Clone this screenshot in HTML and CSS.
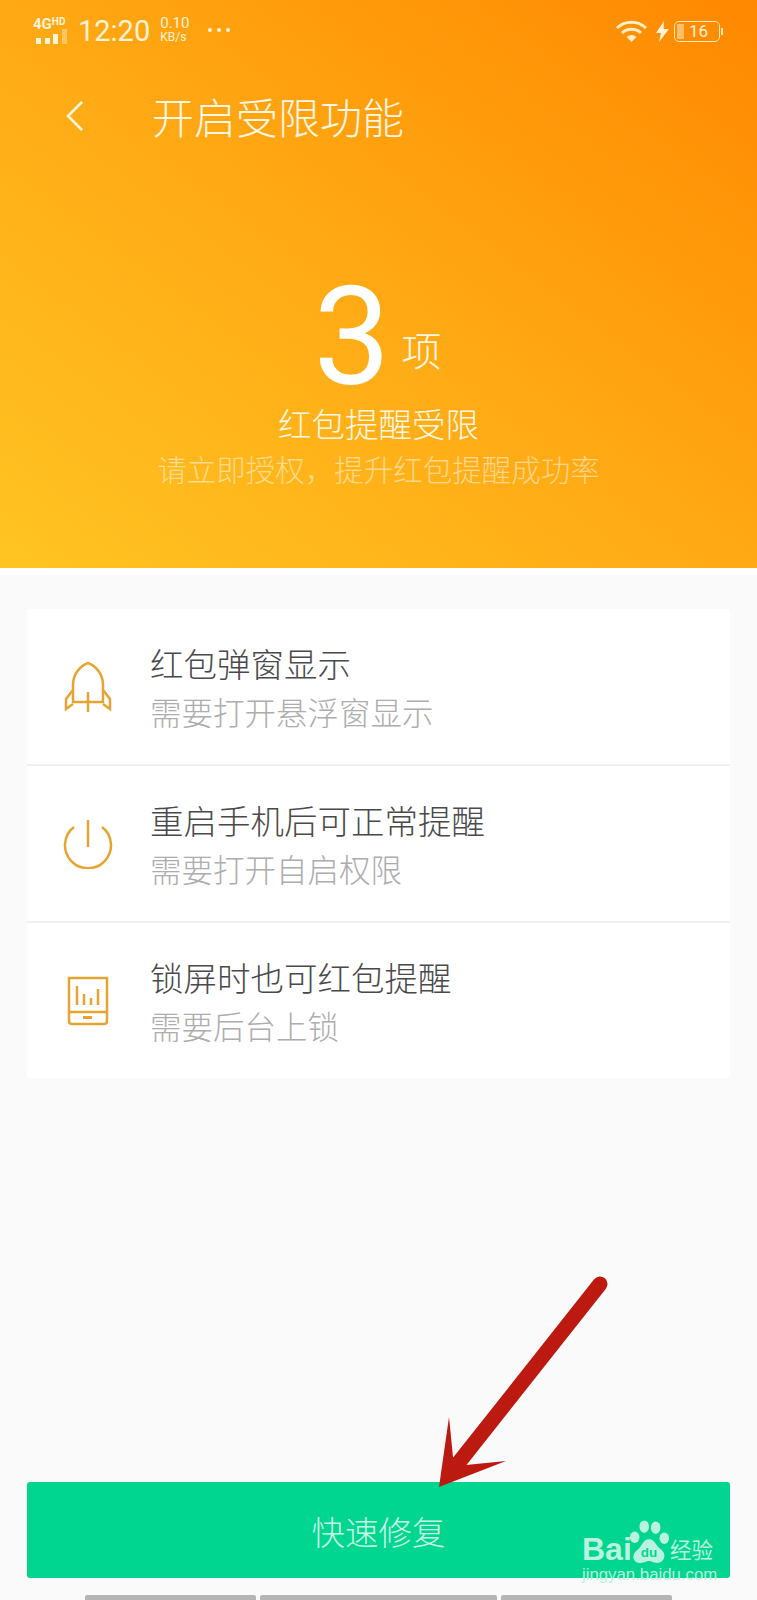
FILE: index.html
```html
<!DOCTYPE html>
<html lang="zh-CN">
<head>
  <meta charset="UTF-8" />
  <meta name="viewport" content="width=device-width, initial-scale=1.0" />
  <title>开启受限功能</title>
  <link rel="stylesheet" href="styles.css">
</head>
<body>

  <header class="hero">
    <!-- Status bar -->
    <div class="statusbar">
      <div class="net">
        <div class="net-label">4G<span>HD</span></div>
        <div class="signal"><i></i><i></i><i></i><i></i></div>
      </div>
      <div class="clock">12:20</div>
      <div class="speed"><span>0.10</span><small>KB/s</small></div>
      <div class="dots"><i></i><i></i><i></i></div>
      <div class="status-right">
        <svg class="wifi" width="33" height="22" viewBox="0 0 33 22">
          <path d="M2 8 A21 21 0 0 1 31 8" fill="none" stroke="#ffeec8" stroke-width="3"/>
          <path d="M7 13 A14 14 0 0 1 26 13" fill="none" stroke="#ffeec8" stroke-width="3"/>
          <path d="M11.5 17 A7.5 7.5 0 0 1 21.5 17 L16.5 22 Z" fill="#ffeec8"/>
        </svg>
        <svg class="bolt" width="13" height="21" viewBox="0 0 13 21">
          <path d="M8 0 L0 12 L5 12 L3 21 L13 8 L7.500 8 Z" fill="#fff3d8"/>
        </svg>
        <div class="battery">
          <div class="battery-level"></div>
          <span>16</span>
        </div>
        <div class="battery-tip"></div>
      </div>
    </div>

    <div class="titlebar">
      <svg class="back" width="20" height="32" viewBox="0 0 20 32">
        <path d="M17 2 L3 16 L17 30" fill="none" stroke="#fff6e4" stroke-width="2.500"/>
      </svg>
      <h1>开启受限功能</h1>
    </div>

    <div class="count"><b>3</b><span>项</span></div>
    <h2>红包提醒受限</h2>
    <p>请立即授权，提升红包提醒成功率</p>
  </header>

  <main>
    <section class="card">
      <div class="row">
        <div class="row-icon">
          <svg width="48" height="52" viewBox="0 0 48 52" fill="none" stroke="#e5a530" stroke-width="2.500">
            <path d="M9 41 V24 C9 13 16 5 24 2 C32 5 39 13 39 24 V41 H9 Z"/>
            <path d="M9 29 L2 38 V48 L9 43"/>
            <path d="M39 29 L46 38 V48 L39 43"/>
            <path d="M24 31 V51"/>
          </svg>
        </div>
        <div class="row-text">
          <h3>红包弹窗显示</h3>
          <p>需要打开悬浮窗显示</p>
        </div>
      </div>
      <div class="row">
        <div class="row-icon">
          <svg width="50" height="50" viewBox="0 0 50 50" fill="none" stroke="#e5a530" stroke-width="2.500">
            <path d="M11 8 A23 23 0 1 0 39 8"/>
            <path d="M25 1 V28"/>
          </svg>
        </div>
        <div class="row-text">
          <h3>重启手机后可正常提醒</h3>
          <p>需要打开自启权限</p>
        </div>
      </div>
      <div class="row">
        <div class="row-icon">
          <svg width="42" height="50" viewBox="0 0 42 50" fill="none" stroke="#e5a530" stroke-width="2.500">
            <path d="M2 2 H40 V45 Q40 48 37 48 H5 Q2 48 2 45 Z"/>
            <path d="M2 36 H40"/>
            <path d="M10 10 V29 M17 18 V29 M24 22 V29 M31 13 V29"/>
            <path d="M16 41.500 H25" stroke-width="3"/>
          </svg>
        </div>
        <div class="row-text">
          <h3>锁屏时也可红包提醒</h3>
          <p>需要后台上锁</p>
        </div>
      </div>
    </section>

    <button class="fix-btn">快速修复</button>

    <div class="bottom-bars"><i></i><i></i><i></i></div>
  </main>

  <!-- Red annotation arrow -->
  <svg class="arrow" width="190" height="230" viewBox="0 0 190 230">
    <path d="M170 14 L30 191" stroke="#bc1a10" stroke-width="15" stroke-linecap="round" fill="none"/>
    <path d="M9 217 L19 147 L23 187 L36 195 L76 191 Z" fill="#bc1a10"/>
  </svg>

  <!-- Baidu watermark -->
  <div class="watermark">
    <div class="wm-top">
      <span class="wm-bai">Bai</span>
      <svg class="wm-paw" width="42" height="44" viewBox="0 0 44 46">
        <ellipse cx="7" cy="18" rx="5" ry="6" fill="#b9f2de"/>
        <ellipse cx="17" cy="7" rx="5" ry="6.500" fill="#b9f2de"/>
        <ellipse cx="29" cy="8" rx="5" ry="6.500" fill="#b9f2de"/>
        <ellipse cx="38" cy="19" rx="5" ry="6" fill="#b9f2de"/>
        <path d="M22 20 C28 20 29 27 35 31 C41 36 38 45 30 45 C26 45 25 43 22 43 C19 43 18 45 13 45 C5 45 3 36 10 31 C15 27 16 20 22 20 Z" fill="#b9f2de"/>
        <text x="22" y="39" text-anchor="middle" class="wm-du">du</text>
      </svg>
      <span class="wm-cn">经验</span>
    </div>
    <div class="wm-url">jingyan.baidu.com</div>
  </div>

</body>
</html>
```

FILE: styles.css
```css
body {
  margin: 0;
  width: 757px;
  height: 1600px;
  overflow: hidden;
  position: relative;
  background: #fafafa;
  font-family: "Noto Sans CJK SC", "Noto Sans", sans-serif;
  display: flex;
  flex-direction: column;
}

/* Orange header */
.hero {
  height: 568px;
  box-sizing: border-box;
  background: linear-gradient(to top right, #ffc422 0%, #ffa914 50%, #ff8800 100%);
  color: white;
  text-align: center;
}
.statusbar {
  height: 60px;
  padding: 14px 34px 0 33px;
  box-sizing: border-box;
  display: flex;
  align-items: flex-start;
  color: #fff3d8;
  font-family: Roboto, "Liberation Sans", sans-serif;
}
.net {
  width: 36px;
  margin-right: 9px;
}
.net-label {
  font-size: 15px;
  font-weight: bold;
  line-height: 15px;
  text-align: left;
  white-space: nowrap;
}
.net-label span {
  font-size: 10px;
  vertical-align: 4px;
}
.signal {
  display: flex;
  align-items: flex-end;
  gap: 3.500px;
  height: 15px;
  margin: -3px 0 0 3px;
}
.signal i {
  width: 5px;
  background: #fff3d8;
}
.signal i:nth-child(1) { height: 6px; }
.signal i:nth-child(2) { height: 6px; }
.signal i:nth-child(3) { height: 10px; }
.signal i:nth-child(4) { height: 15px; opacity: 0.4; }
.clock {
  font-size: 29px;
  font-weight: 400;
  line-height: 34px;
  margin-right: 10px;
}
.speed {
  display: flex;
  flex-direction: column;
  font-size: 15px;
  line-height: 15px;
  margin-top: 2px;
  text-align: left;
}
.speed small {
  font-size: 12px;
  line-height: 13px;
}
.dots {
  display: flex;
  gap: 5px;
  margin: 14px 0 0 19px;
}
.dots i {
  width: 4px;
  height: 4px;
  border-radius: 50%;
  background: #fff3d8;
}
.status-right {
  margin-left: auto;
  display: flex;
  align-items: center;
  height: 24px;
  margin-top: 5px;
}
.wifi {
  margin-right: 8px;
}
.bolt {
  margin-right: 5px;
}
.battery {
  width: 46px;
  height: 21px;
  box-sizing: border-box;
  border: 1.500px solid #ffe9bd;
  border-radius: 5px;
  position: relative;
  font-size: 17px;
  line-height: 18px;
  padding-left: 14px;
  text-align: left;
}
.battery-level {
  position: absolute;
  left: 2px;
  top: 2px;
  bottom: 2px;
  width: 7px;
  background: #ffbe6b;
}
.battery-tip {
  width: 2px;
  height: 7px;
  margin-left: 1px;
  background: #ffe9bd;
}
.titlebar {
  height: 58px;
  margin-top: 27px;
  display: flex;
  align-items: center;
  padding-left: 65px;
}
.back {
  margin-right: 67px;
}
.titlebar h1 {
  margin: 0;
  font-size: 42px;
  font-weight: 300;
  line-height: 58px;
  color: #fff6e4;
}
.count {
  display: flex;
  justify-content: center;
  align-items: flex-end;
  height: 130px;
  margin-top: 126px;
  padding-right: 2px;
}
.count b {
  font-family: Roboto, "Liberation Sans", sans-serif;
  font-size: 137px;
  font-weight: 400;
  line-height: 128px;
}
.count span {
  font-size: 40px;
  font-weight: 300;
  line-height: 56px;
  margin: 0 0 24px 11px;
  color: #fff6e4;
}
.hero h2 {
  margin: -1px 0 0;
  font-size: 33.500px;
  font-weight: 300;
  line-height: 46px;
  color: #fff6e4;
}
.hero p {
  margin: 0;
  font-size: 29.500px;
  font-weight: 300;
  line-height: 44px;
  color: rgba(255, 255, 255, 0.5);
}

/* List and button */
main {
  flex: 1;
  display: flex;
  flex-direction: column;
  border-top: 7px solid #fff;
  padding: 34px 27px 0;
}
.card {
  background: white;
  border-radius: 3px;
}
.row {
  height: 157px;
  box-sizing: border-box;
  display: flex;
  align-items: center;
  border-bottom: 2px solid #f0f0f0;
}
.row:last-child {
  height: 155px;
  border-bottom: none;
}
.row-icon {
  width: 54px;
  margin: 0 35px 0 34px;
  display: flex;
  justify-content: center;
}
.row-text h3 {
  margin: 0;
  font-size: 33.500px;
  font-weight: 300;
  line-height: 48px;
  color: #4a4a4a;
}
.row-text p {
  margin: 0;
  font-size: 31.500px;
  font-weight: 300;
  line-height: 48px;
  color: #adadad;
}
.fix-btn {
  margin-top: auto;
  height: 96px;
  flex: none;
  border: none;
  border-radius: 3px;
  background: #00d68f;
  color: #c8f5e6;
  font-family: inherit;
  font-size: 33.500px;
  font-weight: 300;
  padding: 0;
}
.bottom-bars {
  display: flex;
  flex: none;
  gap: 4px;
  height: 5px;
  margin: 17px 0 0 58px;
}
.bottom-bars i {
  background: #b5b5b5;
  border-radius: 2px 2px 0 0;
}
.bottom-bars i:nth-child(1) { width: 171px; }
.bottom-bars i:nth-child(2) { width: 237px; }
.bottom-bars i:nth-child(3) { width: 171px; }

/* Overlays */
.arrow {
  position: absolute;
  left: 430px;
  top: 1270px;
}
.watermark {
  position: absolute;
  left: 582px;
  top: 1518px;
  width: 136px;
  color: #b9f2de;
}
.wm-top {
  display: flex;
  align-items: flex-end;
  height: 46px;
}
.wm-bai {
  font-family: "Liberation Sans", sans-serif;
  font-weight: bold;
  font-size: 32px;
  line-height: 34px;
  width: 46px;
  margin-bottom: -2px;
}
.wm-du {
  font-family: "Liberation Sans", sans-serif;
  font-size: 14px;
  font-weight: bold;
  fill: #00d68f;
}
.wm-cn {
  font-size: 21.500px;
  line-height: 30px;
  white-space: nowrap;
}
.wm-url {
  font-family: "Liberation Sans", sans-serif;
  font-size: 16.800px;
  line-height: 20px;
  white-space: nowrap;
  margin-top: 1px;
}
```
